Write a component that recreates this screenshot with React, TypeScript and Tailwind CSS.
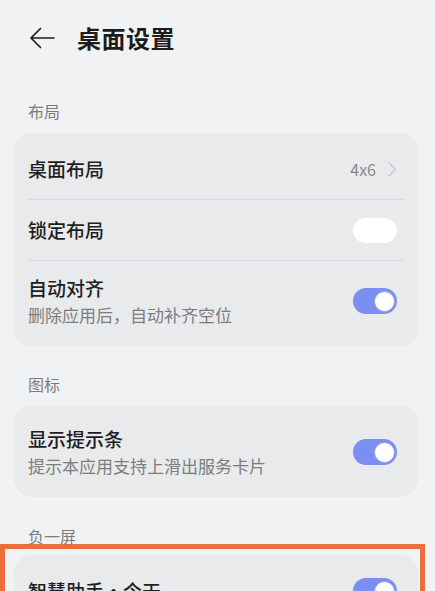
import React from 'react';

type Row = {
  title: string;
  subtitle?: string;
  value?: string;
  toggle?: 'on' | 'off';
};

function Toggle({ on }: { on: boolean }) {
  if (!on) {
    return <div className="w-[44px] h-[25px] rounded-full bg-white shrink-0" />;
  }
  return (
    <div className="w-[44px] h-[26px] rounded-full bg-[#7b8ef1] flex items-center justify-end pr-[2px] shrink-0">
      <div className="w-[21px] h-[21px] rounded-full bg-white border border-[#9aa3d8]" />
    </div>
  );
}

function SettingRow({ row }: { row: Row }) {
  const twoLine = !!row.subtitle;
  return (
    <div
      className={
        twoLine
          ? 'flex items-center justify-between pl-[14px] pr-[21px] pt-[14px] pb-[13px]'
          : 'flex items-center justify-between pl-[14px] pr-[21px] h-[60px]'
      }
    >
      <div className="flex flex-col gap-[2px] min-w-0">
        <span className="text-[19px] leading-[26px] font-medium text-[#1f1f1f]">{row.title}</span>
        {row.subtitle && (
          <span className="text-[17px] leading-[24px] text-[#7d7d7d]">{row.subtitle}</span>
        )}
      </div>
      {row.value && (
        <div className="flex items-center gap-[12px]">
          <span className="text-[16px] text-[#8a8a8a]">{row.value}</span>
          <svg width="9" height="15" viewBox="0 0 9 15" fill="none">
            <path d="M1 1l6.5 6.5L1 14" stroke="#c6c7ca" strokeWidth="1.3" strokeLinecap="round" strokeLinejoin="round" />
          </svg>
        </div>
      )}
      {row.toggle && <Toggle on={row.toggle === 'on'} />}
    </div>
  );
}

function Card({ rows }: { rows: Row[] }) {
  return (
    <div className="ml-[14px] mr-[17px] rounded-[18px] bg-[#e9eaec] py-[6px]">
      {rows.map((r, i) => (
        <div key={i}>
          {i > 0 && <div className="mx-[14px] h-px bg-[#d9dadd]" />}
          <SettingRow row={r} />
        </div>
      ))}
    </div>
  );
}

function SectionLabel({ text, className }: { text: string; className: string }) {
  return (
    <div className={'px-[28px] flex items-end ' + className}>
      <span className="text-[16px] leading-[22px] text-[#7c7c7c]">{text}</span>
    </div>
  );
}

export default function App() {
  return (
    <div
      className="w-[435px] h-[591px] overflow-hidden bg-[#f1f2f4]"
      style={{ fontFamily: '"Noto Sans CJK SC", "Noto Sans", sans-serif' }}
    >
      {/* 顶栏 */}
      <div className="h-[76px] flex items-center pl-[29px] gap-[22px]">
        <svg width="26" height="22" viewBox="0 0 26 22" fill="none">
          <path d="M25 11H2M11.5 1.5L2 11l9.5 9.5" stroke="#1f1f1f" strokeWidth="1.7" strokeLinecap="round" strokeLinejoin="round" />
        </svg>
        <span className="text-[24px] font-bold text-[#1c1c1c] tracking-[0.5px]">桌面设置</span>
      </div>

      <SectionLabel text="布局" className="h-[57px] pb-[11px]" />
      <Card
        rows={[
          { title: '桌面布局', value: '4x6' },
          { title: '锁定布局', toggle: 'off' },
          { title: '自动对齐', subtitle: '删除应用后，自动补齐空位', toggle: 'on' },
        ]}
      />

      <SectionLabel text="图标" className="h-[60px] pb-[11px]" />
      <Card rows={[{ title: '显示提示条', subtitle: '提示本应用支持上滑出服务卡片', toggle: 'on' }]} />

      <div className="h-[47px] px-[28px] flex items-end">
        <span className="text-[16px] leading-[16px] text-[#7c7c7c]">负一屏</span>
      </div>

      {/* 标注框 */}
      <div className="w-[425px] border-[5px] border-[#ee6d3e] pt-[6px] pl-[9px] pr-[2px] pb-[10px]">
        <div className="rounded-[18px] bg-[#e9eaec] py-[6px]">
          <SettingRow row={{ title: '智慧助手·今天', toggle: 'on' }} />
        </div>
      </div>
    </div>
  );
}
